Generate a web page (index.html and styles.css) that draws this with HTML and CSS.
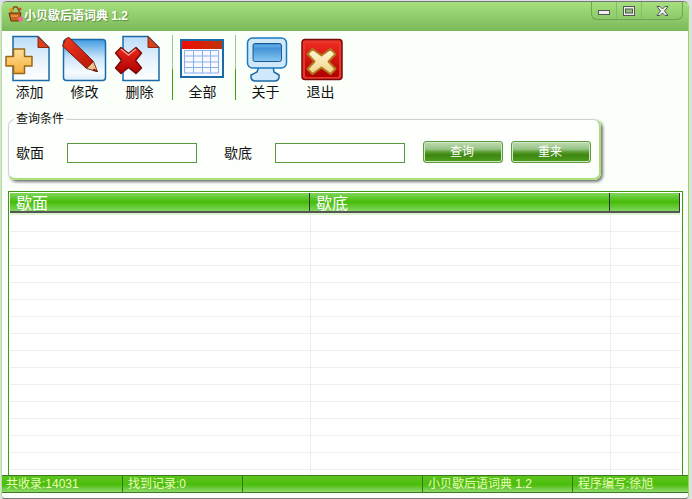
FILE: index.html
```html
<!DOCTYPE html>
<html lang="zh">
<head>
<meta charset="utf-8">
<title>小贝歇后语词典 1.2</title>
<link rel="stylesheet" href="styles.css">
</head>
<body>
<svg class="defs" width="0" height="0">
<defs>
<linearGradient id="sheet" x1="0" y1="0" x2="0" y2="1"><stop offset="0" stop-color="#bcdcf8"/><stop offset=".55" stop-color="#e8f3fc"/><stop offset="1" stop-color="#fff"/></linearGradient>
<linearGradient id="sheetb" x1="0" y1="0" x2="0" y2="1"><stop offset="0" stop-color="#3f9be2"/><stop offset=".45" stop-color="#cde6fa"/><stop offset=".8" stop-color="#f6fbff"/><stop offset="1" stop-color="#dcedfb"/></linearGradient>
<linearGradient id="plus" x1="0" y1="0" x2="0" y2="1"><stop offset="0" stop-color="#ffe09a"/><stop offset="1" stop-color="#f5ae3a"/></linearGradient>
<linearGradient id="redx" x1="0" y1="0" x2="0" y2="1"><stop offset="0" stop-color="#e8281c"/><stop offset="1" stop-color="#b00000"/></linearGradient>
<linearGradient id="pencil" x1="0" y1="0" x2="1" y2="1"><stop offset="0" stop-color="#ee3a20"/><stop offset="1" stop-color="#b81404"/></linearGradient>
<linearGradient id="screen" x1="0" y1="0" x2="0" y2="1"><stop offset="0" stop-color="#2a7fce"/><stop offset="1" stop-color="#86c8f0"/></linearGradient>
<linearGradient id="exitbg" x1="0" y1="0" x2="0" y2="1"><stop offset="0" stop-color="#ee2a20"/><stop offset="1" stop-color="#b00000"/></linearGradient>
<linearGradient id="cream" x1="0" y1="0" x2="0" y2="1"><stop offset="0" stop-color="#fff8d8"/><stop offset="1" stop-color="#f3d488"/></linearGradient>
<linearGradient id="calhead" x1="0" y1="0" x2="1" y2="0"><stop offset="0" stop-color="#ee0c04"/><stop offset="1" stop-color="#c03406"/></linearGradient>
</defs>
</svg>
<div class="window">
  <header class="titlebar">
    <svg class="app-icon" width="17" height="18" viewBox="0 0 17 18">
      <path d="M2 8h12l-1.500 8H4z" fill="#c8641e" stroke="#6b3312"/>
      <path d="M4 8 7 2h3l3 6" fill="none" stroke="#8a4a18" stroke-width="1.500"/>
      <circle cx="4" cy="5" r="2" fill="#e8a028"/>
      <circle cx="13" cy="4" r="1.500" fill="#d04830"/>
      <circle cx="13.500" cy="14" r="2.500" fill="#ee6a8a"/>
      <path d="M4 11h7" stroke="#f3c060"/>
    </svg>
    <span class="title-text">小贝歇后语词典 1.2</span>
    <div class="controls">
      <div class="ctl ctl-min"><svg width="12" height="6" viewBox="0 0 12 6"><rect x=".5" y=".5" width="11" height="4" fill="#f0f0f0" stroke="#555"/></svg></div>
      <div class="ctl ctl-max"><svg width="12" height="10" viewBox="0 0 12 10"><rect x=".5" y=".5" width="11" height="9" fill="#eee" stroke="#555"/><rect x="2.500" y="3" width="7" height="4" fill="#8cc46e" stroke="#555"/></svg></div>
      <div class="ctl ctl-close"><svg width="13" height="10" viewBox="0 0 13 10"><path d="M1 .5h3l2.500 2.500L9 .5h3L8.500 5 12 9.500H9L6.500 7 4 9.500H1L4.500 5z" fill="#eee" stroke="#555"/></svg></div>
    </div>
  </header>

  <nav class="toolbar">
    <div class="tool">
      <svg class="tool-icon tool-icon-shift" width="46" height="48" viewBox="0 0 46 48">
        <path d="M8 1.500H33L44 12.500V45.500H8z" fill="url(#sheet)" stroke="#1a6aa8" stroke-width="1.500"/>
        <path d="M33 1.500 44 12.500H33z" fill="#d8401e" stroke="#8a2a10"/>
        <path d="M8.500 14h11v7.500H27v9.500h-7.500V38.500h-11V31H1v-9.500h7.500z" fill="url(#plus)" stroke="#9a6618" stroke-width="1.500" stroke-linejoin="round"/>
      </svg>
      <span class="tool-label">添加</span>
    </div>
    <div class="tool">
      <svg class="tool-icon" width="46" height="48" viewBox="0 0 46 48">
        <rect x="1.500" y="4.500" width="42" height="41" rx="3" fill="url(#sheetb)" stroke="#1a6aa8" stroke-width="1.500"/>
        <path d="M0.500 11 4 3.500 7 2.500 31.500 26.500 24.500 33.500z" fill="url(#pencil)" stroke="#7a1008"/>
        <path d="M24.500 33.500 31.500 26.500 35.500 36.500z" fill="#f0bf90" stroke="#7a3a18"/>
        <path d="M32 34 35.500 36.500 31 35.500z" fill="#701808" stroke="#701808"/>
      </svg>
      <span class="tool-label">修改</span>
    </div>
    <div class="tool">
      <svg class="tool-icon tool-icon-shift" width="46" height="48" viewBox="0 0 46 48">
        <path d="M8 1.500H33L44 12.500V45.500H8z" fill="url(#sheet)" stroke="#1a6aa8" stroke-width="1.500"/>
        <path d="M33 1.500 44 12.500H33z" fill="#d8401e" stroke="#8a2a10"/>
        <path d="M6 12.500 13.500 18.500 21 12.500 26.500 18 20.500 25.500 26.500 33 21 38.500 13.500 32.500 6 38.500 .5 33 6.500 25.500 .5 18z" fill="url(#redx)" stroke="#7a0808" stroke-width="1.500" stroke-linejoin="round"/>
        <path d="M6 14 13.500 20 21 14" fill="none" stroke="#f4a088" stroke-width="1.500"/>
      </svg>
      <span class="tool-label">删除</span>
    </div>
    <div class="tool-sep"></div>
    <div class="tool">
      <svg class="tool-icon tool-icon-shift" width="46" height="48" viewBox="0 0 46 48">
        <rect x="3" y="5" width="42" height="37" fill="#f8f9ff" stroke="#1a6aa8" stroke-width="2"/>
        <rect x="4" y="6" width="40" height="8" fill="url(#calhead)"/>
        <path d="M6.500 15.500h34M6.500 21h34M6.500 27h34M6.500 32.500h34M6.500 38h34M6.500 15.500v22.500M15.500 15.500v22.500M24.500 15.500v22.500M32.500 15.500v22.500M40.500 15.500v22.500" stroke="#8ab0e8" fill="none"/>
      </svg>
      <span class="tool-label">全部</span>
    </div>
    <div class="tool-sep"></div>
    <div class="tool">
      <svg class="tool-icon" width="46" height="48" viewBox="0 0 46 48">
        <path d="M16 31h14l1 6 5 3v3q-1 3-4 3H12q-3 0-4-3v-3l6-3z" fill="#cfe8fa" stroke="#1a6aa8" stroke-width="1.500"/>
        <rect x="4.500" y="3" width="39" height="30" rx="5" fill="#cfe8fa" stroke="#1a7ac0" stroke-width="1.500"/>
        <rect x="10" y="8.500" width="28.500" height="18" rx="2" fill="url(#screen)" stroke="#1a5a90"/>
        <rect x="11" y="9.500" width="26.500" height="3" fill="#5aa8e4"/>
      </svg>
      <span class="tool-label">关于</span>
    </div>
    <div class="tool">
      <svg class="tool-icon" width="46" height="48" viewBox="0 0 46 48">
        <rect x="4" y="4.500" width="40" height="40" rx="3" fill="#e8362a" stroke="#7a0808" stroke-width="1.500"/>
        <rect x="7" y="8" width="34" height="34" rx="2" fill="url(#exitbg)"/>
        <path d="M14.500 14 23.500 20.500 32.500 14 37.500 19 30.500 26.500 37.500 34 32.500 39 23.500 32.500 14.500 39 9.500 34 16.500 26.500 9.500 19z" fill="url(#cream)" stroke="#b07a20" stroke-linejoin="round" stroke-width="2"/>
      </svg>
      <span class="tool-label">退出</span>
    </div>
  </nav>

  <fieldset class="query">
    <legend class="query-legend">查询条件</legend>
    <div class="query-row">
      <label class="field-label">歇面</label>
      <input class="field field-a" type="text">
      <label class="field-label field-label-b">歇底</label>
      <input class="field field-b" type="text">
      <button class="btn btn-first" type="button">查询</button>
      <button class="btn" type="button">重来</button>
    </div>
  </fieldset>

  <section class="table">
    <div class="thead">
      <div class="th th-a">歇面</div>
      <div class="th th-b">歇底</div>
      <div class="th th-c"></div>
    </div>
    <div class="tbody">
      <div class="row"><i></i><i></i></div>
      <div class="row"><i></i><i></i></div>
      <div class="row"><i></i><i></i></div>
      <div class="row"><i></i><i></i></div>
      <div class="row"><i></i><i></i></div>
      <div class="row"><i></i><i></i></div>
      <div class="row"><i></i><i></i></div>
      <div class="row"><i></i><i></i></div>
      <div class="row"><i></i><i></i></div>
      <div class="row"><i></i><i></i></div>
      <div class="row"><i></i><i></i></div>
      <div class="row"><i></i><i></i></div>
      <div class="row"><i></i><i></i></div>
      <div class="row"><i></i><i></i></div>
      <div class="row"><i></i><i></i></div>
      <div class="row"><i></i><i></i></div>
    </div>
  </section>

  <footer class="status">
    <div class="cell cell-1">共收录:14031</div>
    <div class="cell cell-2">找到记录:0</div>
    <div class="cell cell-3"></div>
    <div class="cell cell-4">小贝歇后语词典 1.2</div>
    <div class="cell cell-5">程序编写:徐旭</div>
  </footer>
</div>
</body>
</html>
```
FILE: styles.css
```css
* { box-sizing: border-box; }
html, body { margin: 0; height: 100%; overflow: hidden; }
body {
  background: #dcdfe6;
  font-family: "Liberation Sans", "Noto Sans CJK SC", sans-serif;
  font-size: 14px;
  color: #111;
}
.defs { position: absolute; }
.window {
  width: 688px;
  height: 498px;
  margin: 1px 0 0 1px;
  display: flex;
  flex-direction: column;
  background: #fbfffa;
  border: 1px solid #777;
  border-left-color: #b5e090;
  border-right-color: #8fe040;
  border-radius: 6px 6px 4px 4px;
  overflow: hidden;
}
.titlebar {
  flex: none;
  height: 29px;
  display: flex;
  align-items: flex-start;
  padding: 3px 0 0 5px;
  background: linear-gradient(#a6e07e, #7cb95a);
  position: relative;
}
.app-icon { flex: none; }
.title-text {
  padding-top: 4px;
  font-size: 12px;
  line-height: 14px;
  font-weight: bold;
  color: #fff;
  text-shadow: 1px 1px 1px #5c8f40;
}
.controls {
  position: absolute;
  top: -1px;
  right: 5px;
  height: 19px;
  width: 92px;
  display: flex;
  border: 1px solid #6ea454;
  border-top: 0;
  border-radius: 0 0 6px 6px;
}
.ctl {
  display: flex;
  align-items: center;
  justify-content: center;
  border-right: 1px solid #84bd66;
}
.ctl-min { width: 25px; padding-top: 5px; }
.ctl-max { width: 25px; padding-top: 1px; }
.ctl-close { flex: 1; border-right: 0; padding-top: 1px; }
.toolbar {
  flex: none;
  height: 74px;
  display: flex;
  padding: 4px 0 0;
}
.tool {
  width: 55px;
  display: flex;
  flex-direction: column;
  align-items: center;
}
.tool-icon { flex: none; height: 48px; }
.tool-icon-shift { margin-left: -3px; }
.tool-label {
  margin-top: -1px;
  font-size: 14px;
  line-height: 20px;
  color: #111;
}
.tool-sep {
  width: 1px;
  height: 65px;
  margin: 0 2px 0 5px;
  background: linear-gradient(#9cc98a 0 52%, #3f9a10 52%);
}
.query {
  flex: none;
  width: 593px;
  height: 68px;
  margin: 7px 0 0 6px;
  padding: 0 0 0 7px;
  border: 1px solid #cfd2cf;
  border-right: 2px solid #a8e07a;
  border-bottom: 2px solid #a8e07a;
  border-radius: 7px;
  background: #fcfffb;
  box-shadow: 2px 2px 3px #777;
  min-width: 0;
}
.query-legend {
  padding: 0 2px;
  margin-left: -2px;
  font-size: 12px;
  line-height: 15px;
  color: #111;
}
.query-row {
  display: flex;
  align-items: center;
  margin-top: 14px;
}
.field-label { font-size: 14px; line-height: 20px; width: 28px; margin-top: 2px; }
.field-label-b { margin-left: 27px; }
.field {
  width: 130px;
  height: 20px;
  margin: 2px 0 0 23px;
  border: 1px solid #5a9a3a;
  background: #fff;
  padding: 0;
  outline: 0;
}
.btn {
  width: 80px;
  height: 22px;
  margin-left: 8px;
  padding: 0 2px 0 0;
  border: 1px solid #5d9a40;
  border-radius: 3px;
  font-family: "Liberation Sans", "Noto Sans CJK SC", sans-serif;
  font-size: 12px;
  line-height: 18px;
  color: #fff;
  background: linear-gradient(#c0dcb0 0, #98c488 35%, #5a9e30 50%, #3d8510 65%, #4f9f1c 100%);
  box-shadow: inset 0 0 0 1px #cfe6c4;
}
.btn-first { margin-left: 18px; }
.table {
  flex: none;
  width: 675px;
  height: 284px;
  margin: 11px 0 0 6px;
  padding: 1px;
  border: 1px solid #3f9a10;
  border-bottom: 0;
  background: #fff;
  overflow: hidden;
}
.thead {
  display: flex;
  height: 20px;
  width: 670px;
  border-bottom: 2px solid #555;
  box-shadow: 0 2px 0 #dff2d2;
}
.th {
  height: 18px;
  padding-left: 6px;
  font-size: 16px;
  line-height: 21px;
  color: #fff;
  background: linear-gradient(#7fd75c, #46bc08 50%, #7fd75c);
  border-right: 1px solid #333;
  overflow: hidden;
}
.th-a { width: 300px; }
.th-b { width: 300px; }
.th-c { width: 70px; }
.tbody { margin-top: 2px; width: 671px; }
.row {
  height: 17px;
  display: flex;
  border-bottom: 1px solid #eee;
}
.row i { display: block; width: 300px; flex: none; border-right: 1px solid #eee; }
.row i:first-child { width: 301px; }
.status {
  flex: none;
  height: 18px;
  display: flex;
  border-top: 1px solid #3e7a22;
  border-bottom: 1px solid #3e7a22;
  background: linear-gradient(#5cc41c, #4cbd0c 55%, #8fd870);
}
.cell {
  height: 16px;
  padding-left: 5px;
  font-size: 12px;
  line-height: 16px;
  color: #e8ffb8;
  border-right: 1px solid #2f7a10;
  white-space: nowrap;
}
.cell-1 { width: 121px; padding-left: 4px; }
.cell-2 { width: 120px; }
.cell-3 { width: 180px; }
.cell-4 { width: 150px; }
.cell-5 { flex: 1; border-right: 0; }
```
